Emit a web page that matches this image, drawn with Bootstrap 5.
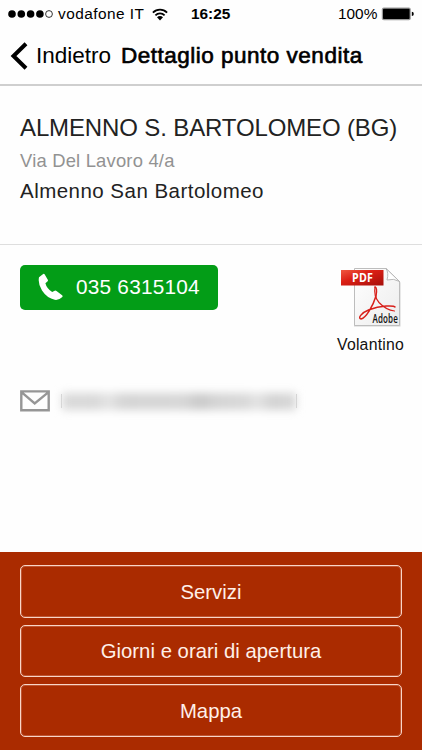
<!DOCTYPE html>
<html lang="it">
<head>
<meta charset="utf-8">
<meta name="viewport" content="width=device-width, initial-scale=1">
<title>Dettaglio punto vendita</title>
<link href="https://cdn.jsdelivr.net/npm/bootstrap@5.3.0/dist/css/bootstrap.min.css" rel="stylesheet">
<style>
body{font-family:"Liberation Sans",Arial,sans-serif;color:#222;background:#fefefe;height:750px;overflow:hidden}
svg{display:block;flex:none}
.status-bar{height:28px;color:#000;font-size:15.4px;line-height:28px;padding-left:8px}
.carrier{font-size:15.4px;letter-spacing:.45px;margin-left:5px;width:94px}
.clock{font-weight:700;font-size:15.4px;margin-left:23px;width:147px}
.top-nav{height:57.5px;border-bottom:2px solid #cfcfcf;color:#000;font-size:22.5px;line-height:56px;padding-left:10px}
.back-link{width:85px;color:#000;padding-left:8px}
.page-title{font-size:22.5px;letter-spacing:.5px;line-height:56px;-webkit-text-stroke:.65px #000}
.shop{height:159px;border-bottom:1px solid #dedede;padding:26px 20px 0}
.shop-name{font-size:24px;line-height:32px;letter-spacing:-.13px}
.street{font-size:18.4px;line-height:32px;letter-spacing:.2px;color:#929292;margin-top:1px}
.town{font-size:20.5px;line-height:30px;letter-spacing:.47px;margin-top:-1px}
.contacts{height:99px;margin-top:20px;padding-left:20px;padding-right:14px}
.btn-call{--bs-btn-color:#fff;--bs-btn-bg:#039d17;--bs-btn-hover-bg:#028513;--bs-btn-hover-color:#fff;width:198px;height:45px;border:0;border-radius:5px;font-size:20.8px;letter-spacing:.22px;padding:0 0 0 18px}
.flyer{width:75px;font-size:15.8px;letter-spacing:.22px;line-height:20px;color:#111}
.flyer span{margin-top:2px}
.mail-row{margin-top:22px;height:30px;padding-left:20px}
.masked{width:236px;height:14px;border:solid #d4d4d4;border-width:0 1px;margin-left:11px}
.smear{height:17px;margin-top:-1px;filter:blur(4px);background:linear-gradient(90deg,#dadada 0,#d8d8d8 14%,#e4e4e4 20%,#d4d4d4 26%,#d6d6d6 52%,#c9c9c9 59%,#d4d4d4 66%,#d8d8d8 79%,#e4e4e4 83%,#d2d2d2 90%,#d8d8d8 100%)}
.actions{background:#aa2b00;height:198px;padding:13px 20px 0;gap:7px}
.btn-act{--bs-btn-color:#fff0e9;--bs-btn-border-color:#f8d5c8;--bs-btn-hover-bg:#bd3a0c;--bs-btn-hover-color:#fff;height:52.5px;flex:none;box-shadow:inset 0 0 0 1px rgba(248,213,200,.25);border-radius:5px;font-size:20.3px;letter-spacing:.03px;padding:1px 0 0}
</style>
<script src="https://cdn.jsdelivr.net/npm/bootstrap@5.3.0/dist/js/bootstrap.bundle.min.js"></script>
</head>
<body class="d-flex flex-column">
<header>
  <div class="status-bar d-flex align-items-center">
    <svg width="45" height="28" viewBox="0 0 45 28"><g><circle cx="4" cy="14" r="3.8"/><circle cx="13.3" cy="14" r="3.8"/><circle cx="22.6" cy="14" r="3.8"/><circle cx="31.9" cy="14" r="3.8"/></g><circle cx="41" cy="14" r="3.4" fill="none" stroke="#000" stroke-width=".8"/></svg>
    <span class="carrier text-nowrap">vodafone IT</span>
    <svg width="16" height="13" viewBox="0 0 16 13"><path d="M.9 4.7C4.9 .7 11.1 .7 15.1 4.7M3.4 7.4C6 4.8 10 4.8 12.6 7.4" fill="none" stroke="#000" stroke-width="1.8"/><path d="M8 12.4 5 9.3C6.7 7.7 9.3 7.7 11 9.3z"/></svg>
    <span class="clock">16:25</span>
    <span>100%</span>
    <svg class="ms-1" width="34" height="14" viewBox="0 0 34 14"><rect x=".8" y=".6" width="29" height="12.6" rx="2" fill="#999"/><rect x="2" y="1.8" width="26.6" height="10.2" rx=".8"/><path d="M30.8 4.8q2 0 2 2.1t-2 2.1z"/></svg>
  </div>
  <nav class="top-nav d-flex align-items-center">
    <svg width="18" height="28" viewBox="0 0 18 28"><path d="M16 1.8 3.5 14 16 26.2" fill="none" stroke="#000" stroke-width="4"/></svg>
    <a class="back-link text-decoration-none" href="#">Indietro</a>
    <h1 class="page-title fw-normal mb-0 ms-2 text-nowrap">Dettaglio punto vendita</h1>
  </nav>
</header>
<main class="flex-grow-1">
  <section class="shop">
    <h2 class="shop-name fw-normal mb-0 text-nowrap">ALMENNO S. BARTOLOMEO (BG)</h2>
    <div class="street">Via Del Lavoro 4/a</div>
    <div class="town">Almenno San Bartolomeo</div>
  </section>
  <section class="contacts d-flex justify-content-between align-items-start">
    <a class="btn btn-call d-flex align-items-center" href="#">
      <svg width="26" height="28" viewBox="0 0 26 28"><path fill="#fff" d="M1 4.3 5.2 1Q6 .5 6.6 1.3L9.8 6.8Q10.3 7.8 9.4 8.5L7.4 10.2Q8.6 15.3 14.2 19.1L16.7 17.7Q17.7 17.2 18.5 18L24.1 22.3Q25.2 23.3 24 24.2 20.6 27.5 16.7 26.8 9.2 25.4 4 17.6-.3 10.9 1 4.3z"/></svg>
      <span class="ms-2 ps-1 text-nowrap">035 6315104</span>
    </a>
    <a class="flyer d-flex flex-column align-items-center text-decoration-none" href="#">
      <svg width="64" height="68" viewBox="0 0 64 68">
        <defs>
          <linearGradient id="paper" x2="1" y2="1"><stop stop-color="#fff"/><stop offset="1" stop-color="#ececec"/></linearGradient>
          <linearGradient id="redband" x2="1" y2="1"><stop stop-color="#f05840"/><stop offset=".4" stop-color="#dc2015"/><stop offset="1" stop-color="#a50e0a"/></linearGradient>
        </defs>
        <path d="M15 4.5H48L61.5 17.5V61.5H15z" fill="#aaa" opacity=".5"/>
        <path d="M15.5 3.5H47L60.5 16.5V60.5H15.5z" fill="url(#paper)" stroke="#bdbdbd"/>
        <path d="M47 3.5Q50 8 48 15 55 13 60.5 16.5z" fill="#fff" stroke="#aaa" stroke-width=".8"/>
        <g fill="none" stroke="#d8201b" stroke-linecap="round"><path d="M36 22Q34.5 31 40 37.500 47 45 55.500 46" stroke-width="1.2"/><path d="M36 22Q38.500 23 37 31C34 41 27 53 22 54 18.500 53.500 22 48 30 44.800 42 40 55 40.500 56 42" stroke-width="1.5"/></g>
        <rect x="2" y="5" width="42.5" height="15.5" fill="url(#redband)"/>
        <text x="13" y="17.2" font-family="Open Sans,sans-serif" font-weight="700" font-size="12.6" textLength="21" lengthAdjust="spacingAndGlyphs" fill="#fff">PDF</text>
        <text x="33.5" y="58.3" font-family="Open Sans,sans-serif" font-weight="600" font-size="12.3" textLength="25.5" lengthAdjust="spacingAndGlyphs" fill="#111">Adobe</text>
      </svg>
      <span class="text-nowrap">Volantino</span>
    </a>
  </section>
  <div class="mail-row d-flex align-items-center">
    <svg width="30" height="22" viewBox="0 0 30 22"><path d="M1.3 1.4H28.7V20.2H1.3zM1.8 2.4 14.7 13.4 28.2 2.4" fill="none" stroke="#969696" stroke-width="2.4"/></svg>
    <div class="masked"><div class="smear"></div></div>
  </div>
</main>
<footer class="actions d-flex flex-column">
  <button class="btn btn-act w-100" type="button">Servizi</button>
  <button class="btn btn-act w-100" type="button">Giorni e orari di apertura</button>
  <button class="btn btn-act w-100" type="button">Mappa</button>
</footer>
</body>
</html>
